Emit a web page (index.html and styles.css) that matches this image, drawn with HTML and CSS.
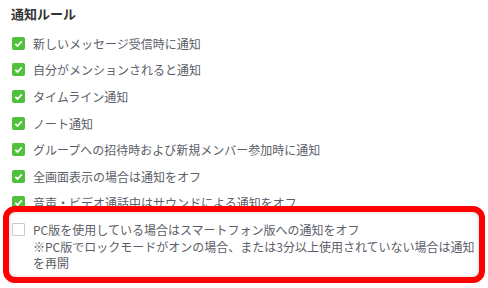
FILE: index.html
```html
<!DOCTYPE html>
<html lang="ja">
<head>
    <meta charset="UTF-8">
    <meta name="viewport" content="width=device-width, initial-scale=1.0">
    <title>通知ルール</title>
    <link rel="stylesheet" href="styles.css">
</head>
<body>
    <div class="wrap">
        <h2 class="title">通知ルール</h2>
        <ul class="rules">
            <li><span class="check on"><svg viewBox="0 0 13 13"><path d="M3.3 6.8 5.5 9 9.8 4.3"/></svg></span>新しいメッセージ受信時に通知</li>
            <li><span class="check on"><svg viewBox="0 0 13 13"><path d="M3.3 6.8 5.5 9 9.8 4.3"/></svg></span>自分がメンションされると通知</li>
            <li><span class="check on"><svg viewBox="0 0 13 13"><path d="M3.3 6.8 5.5 9 9.8 4.3"/></svg></span>タイムライン通知</li>
            <li><span class="check on"><svg viewBox="0 0 13 13"><path d="M3.3 6.8 5.5 9 9.8 4.3"/></svg></span>ノート通知</li>
            <li><span class="check on"><svg viewBox="0 0 13 13"><path d="M3.3 6.8 5.5 9 9.8 4.3"/></svg></span>グループへの招待時および新規メンバー参加時に通知</li>
            <li><span class="check on"><svg viewBox="0 0 13 13"><path d="M3.3 6.8 5.5 9 9.8 4.3"/></svg></span>全画面表示の場合は通知をオフ</li>
            <li><span class="check on"><svg viewBox="0 0 13 13"><path d="M3.3 6.8 5.5 9 9.8 4.3"/></svg></span>音声・ビデオ通話中はサウンドによる通知をオフ</li>
        </ul>
        <!-- 強調枠 -->
        <div class="highlight">
            <span class="check"></span>
            <p>PC版を使用している場合はスマートフォン版への通知をオフ<br>※PC版でロックモードがオンの場合、または3分以上使用されていない場合は通知を再開</p>
        </div>
    </div>
</body>
</html>
```

FILE: styles.css
```css
body {
    margin: 0;
    background-color: #fff;
    font-family: "Noto Sans CJK JP", "Noto Sans", sans-serif;
}

.wrap {
    padding: 0 3px;
}

.title {
    margin: 0;
    padding: 6px 0 0 8px;
    font-size: 13px;
    line-height: 16px;
    font-weight: bold;
    color: #333;
}

.rules {
    margin: 8px 0 0;
    padding: 0 0 0 9px;
    list-style: none;
}

.rules li {
    display: flex;
    align-items: center;
    gap: 8px;
    height: 26.6px;
    font-size: 12px;
    color: #5b6068;
    white-space: nowrap;
}

.check {
    flex: none;
    width: 13px;
    height: 13px;
    box-sizing: border-box;
    border: 1px solid #c9c9c9;
    border-radius: 1px;
    background-color: #fff;
}

.check.on {
    border: none;
    border-radius: 2px;
    background-color: #4fc13c;
}

.check svg {
    display: block;
    width: 13px;
    height: 13px;
    fill: none;
    stroke: #fff;
    stroke-width: 1.8;
}

.highlight {
    position: relative;
    z-index: 1;
    display: flex;
    gap: 8px;
    margin-top: -10px;
    padding: 10px 0 5px 3px;
    border: 6px solid #fd0000;
    border-radius: 12px;
    background-color: #fff;
    box-shadow: inset 0 0 4px rgba(0, 0, 0, 0.18);
}

.highlight .check {
    margin-top: 1px;
}

.highlight p {
    margin: 0;
    font-size: 12px;
    line-height: 16.5px;
    color: #5b6068;
}
```
